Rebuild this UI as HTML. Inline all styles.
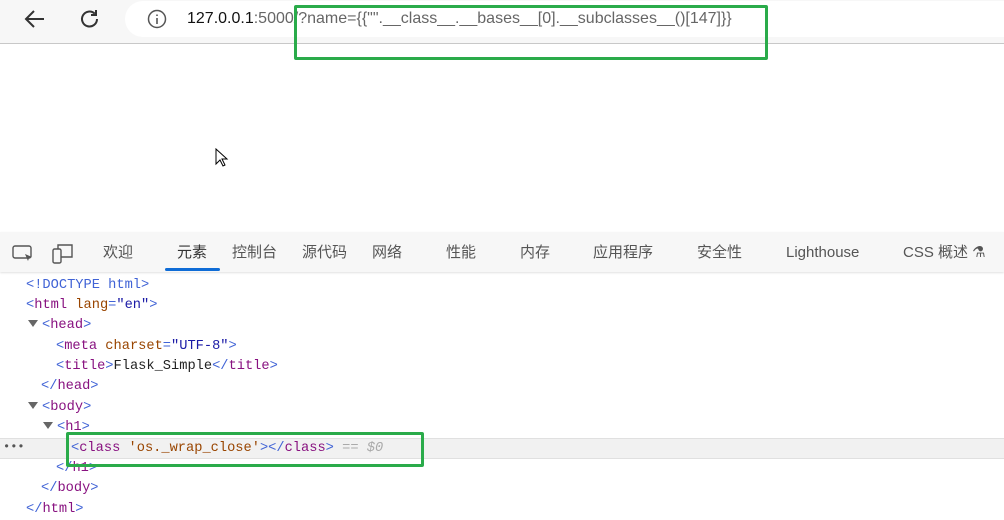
<!DOCTYPE html><html><head><meta charset="utf-8"><style>
body{margin:0;width:1004px;height:516px;position:relative;background:#fff;overflow:hidden;font-family:"Liberation Sans","Noto Sans CJK SC",sans-serif}
.a{position:absolute}
.top{left:0;top:0;width:1004px;height:43px;background:#f7f7f7;border-bottom:1px solid #c8c8c8}
.url{left:125px;top:1px;width:900px;height:36px;background:#fff;border-radius:18px}
.tabs{left:0;top:232px;width:1004px;height:40px;background:#f7f7f7;box-shadow:0 1px 2px rgba(0,0,0,.12)}
.t{position:absolute;top:243px;font-size:15px;line-height:20px;height:20px;color:#555}
.c{position:absolute;font-family:"Liberation Mono",monospace;font-size:13.7px;white-space:pre;line-height:20px}
.tg{color:#881280}.br{color:#4063d6}.at{color:#994500}.v{color:#1a1aa6}.tx{color:#222}
.tri{display:inline-block;width:0;height:0;border-left:5px solid transparent;border-right:5px solid transparent;border-top:7px solid #666;margin-right:4px;vertical-align:1px}
.gb{position:absolute;border:3px solid #2aab4a;border-radius:2px}
</style></head><body>
<div class="a top"></div>
<div class="a url"></div>
<svg class="a" style="left:22px;top:8px" width="26" height="22"><path d="M22 11H4M12 3L4 11l8 8" stroke="#333" stroke-width="2" fill="none"/></svg>
<svg class="a" style="left:79px;top:8px" width="22" height="22"><path d="M18 11a7.5 7.5 0 1 1-2.2-5.3M17 2v5h-5" stroke="#333" stroke-width="2" fill="none"/></svg>
<svg class="a" style="left:147px;top:9px" width="20" height="20"><circle cx="10" cy="10" r="8.5" stroke="#555" stroke-width="1.5" fill="none"/><path d="M10 9v6M10 5.5v1.5" stroke="#555" stroke-width="1.6"/></svg>
<div class="a" style="left:187px;top:10px;font-size:16px;color:#666;white-space:pre"><span style="color:#111">127.0.0.1</span>:5000/?name={{"".__class__.__bases__[0].__subclasses__()[147]}}</div>
<div class="gb" style="left:294px;top:5px;width:468px;height:49px"></div>
<svg class="a" style="left:215px;top:148px" width="14" height="20"><path d="M1 1v15l4-4 3 6 2-1-3-6h5z" fill="#fff" stroke="#000"/></svg>
<div class="a tabs"></div>
<svg class="a" style="left:12px;top:244px" width="22" height="20"><rect x="1" y="2" width="18" height="12" rx="2" stroke="#555" fill="none" stroke-width="1.4"/><path d="M13 10l7 3-3 1-1 3z" fill="#555"/></svg>
<svg class="a" style="left:52px;top:243px" width="22" height="22"><rect x="1" y="6" width="8" height="14" rx="1.5" stroke="#555" fill="none" stroke-width="1.4"/><path d="M6 6V2h14v12h-11" stroke="#555" fill="none" stroke-width="1.4"/></svg>
<span class="t" style="left:103px">欢迎</span>
<span class="t" style="left:177px;color:#333">元素</span>
<div class="a" style="left:165px;top:268px;width:55px;height:3px;background:#0f6cd6;border-radius:2px"></div>
<span class="t" style="left:232px">控制台</span>
<span class="t" style="left:302px">源代码</span>
<span class="t" style="left:372px">网络</span>
<span class="t" style="left:446px">性能</span>
<span class="t" style="left:520px">内存</span>
<span class="t" style="left:593px">应用程序</span>
<span class="t" style="left:697px">安全性</span>
<span class="t" style="left:786px;top:243px">Lighthouse</span>
<span class="t" style="left:903px">CSS 概述 ⚗</span>
<div class="a" style="left:0;top:438px;width:1004px;height:19px;background:#f1f1f1;border-top:1px solid #e0e0e0;border-bottom:1px solid #e0e0e0"></div>
<div class="c" style="left:3px;top:437px;color:#555;font-size:12px">•••</div>
<div class="c" style="left:26px;top:276px"><span class="br">&lt;!DOCTYPE html&gt;</span></div>
<div class="c" style="left:26px;top:296px"><span class="br">&lt;</span><span class="tg">html</span> <span class="at">lang</span><span class="br">=</span><span class="v">"en"</span><span class="br">&gt;</span></div>
<div class="c" style="left:28px;top:316px"><span class="tri"></span><span class="br">&lt;</span><span class="tg">head</span><span class="br">&gt;</span></div>
<div class="c" style="left:56px;top:337px"><span class="br">&lt;</span><span class="tg">meta</span> <span class="at">charset</span><span class="br">=</span><span class="v">"UTF-8"</span><span class="br">&gt;</span></div>
<div class="c" style="left:56px;top:357px"><span class="br">&lt;</span><span class="tg">title</span><span class="br">&gt;</span><span class="tx">Flask_Simple</span><span class="br">&lt;/</span><span class="tg">title</span><span class="br">&gt;</span></div>
<div class="c" style="left:41px;top:377px"><span class="br">&lt;/</span><span class="tg">head</span><span class="br">&gt;</span></div>
<div class="c" style="left:28px;top:398px"><span class="tri"></span><span class="br">&lt;</span><span class="tg">body</span><span class="br">&gt;</span></div>
<div class="c" style="left:43px;top:418px"><span class="tri"></span><span class="br">&lt;</span><span class="tg">h1</span><span class="br">&gt;</span></div>
<div class="c" style="left:71px;top:439px"><span class="br">&lt;</span><span class="tg">class</span> <span class="at">'os._wrap_close'</span><span class="br">&gt;&lt;/</span><span class="tg">class</span><span class="br">&gt;</span> <span style="color:#aaa;font-style:italic">== $0</span></div>
<div class="c" style="left:56px;top:459px"><span class="br">&lt;/</span><span class="tg">h1</span><span class="br">&gt;</span></div>
<div class="c" style="left:41px;top:479px"><span class="br">&lt;/</span><span class="tg">body</span><span class="br">&gt;</span></div>
<div class="c" style="left:26px;top:500px"><span class="br">&lt;/</span><span class="tg">html</span><span class="br">&gt;</span></div>
<div class="gb" style="left:66px;top:432px;width:352px;height:29px"></div>
</body></html>
